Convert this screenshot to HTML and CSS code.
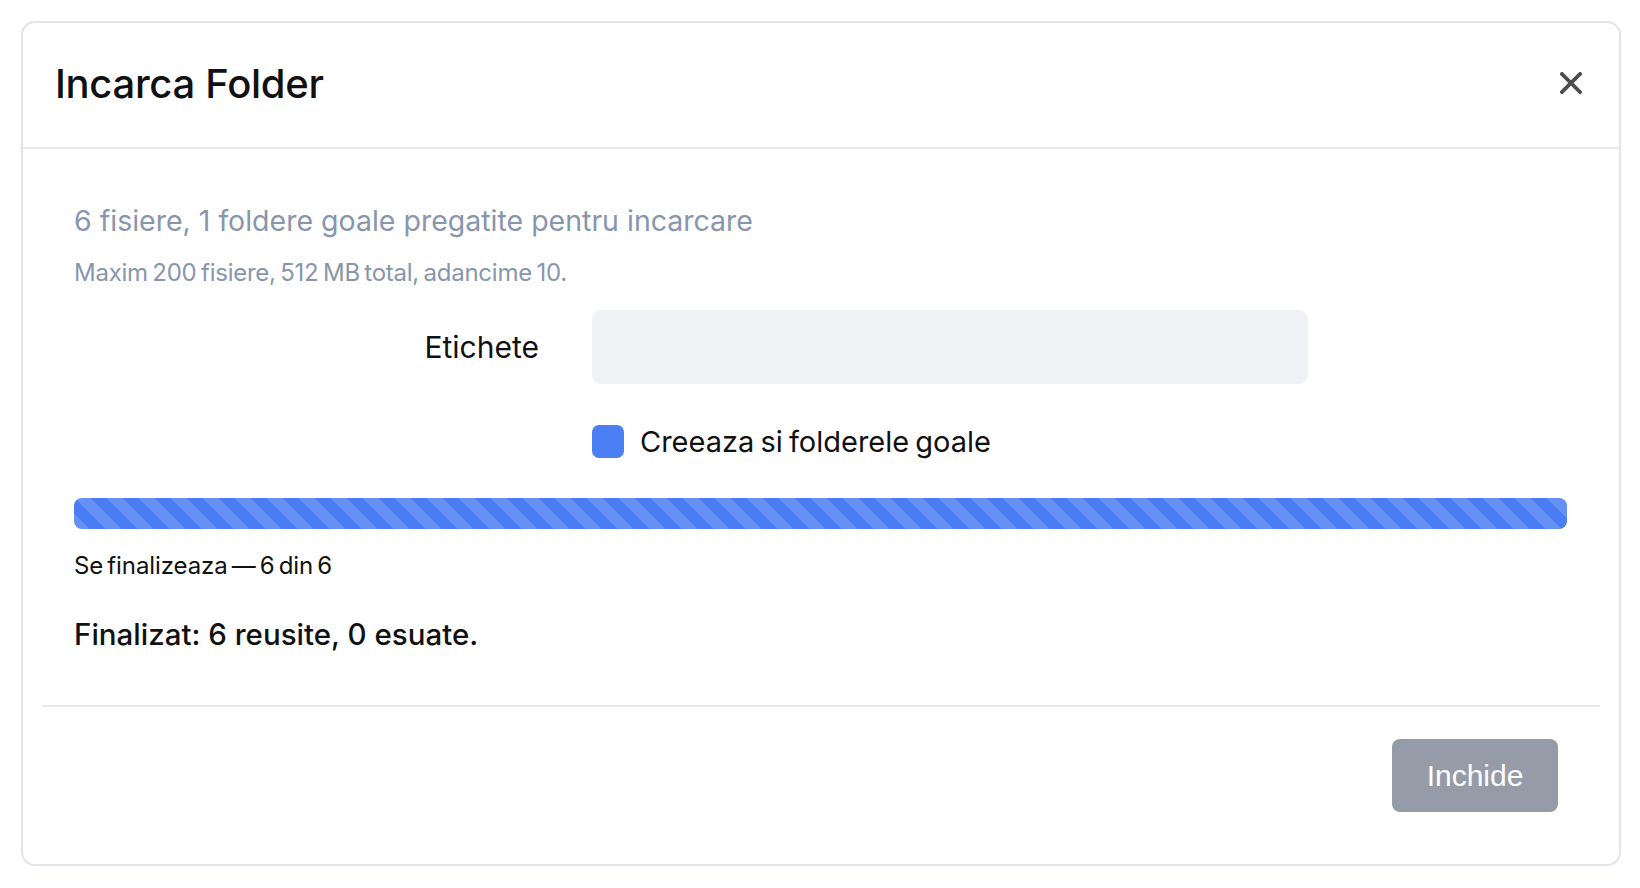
FILE: index.html
```html
<!DOCTYPE html>
<html lang="ro">
<head>
<meta charset="utf-8">
<title>Incarca Folder</title>
<link rel="stylesheet" href="styles.css">
</head>
<body>
<div class="modal">
  <div class="modal-header">
    <h5 class="modal-title">Incarca Folder</h5>
    <button class="btn-close" aria-label="Close">
      <svg viewBox="0 0 22 22" width="22" height="22"><path d="M2 2 L20 20 M20 2 L2 20" stroke="#4d4d4d" stroke-width="3.8" stroke-linecap="square" fill="none"/></svg>
    </button>
  </div>
  <div class="modal-body">
    <p class="summary">6 fisiere, 1 foldere goale pregatite pentru incarcare</p>
    <p class="limits">Maxim 200 fisiere, 512 MB total, adancime 10.</p>
    <div class="form-row">
      <label class="form-label">Etichete</label>
      <div class="form-input"></div>
    </div>
    <div class="check-row">
      <span class="checkbox"></span>
      <span class="check-label">Creeaza si folderele goale</span>
    </div>
    <div class="progress"><div class="progress-bar"></div></div>
    <p class="status">Se finalizeaza — 6 din 6</p>
    <p class="result">Finalizat: 6 reusite, 0 esuate.</p>
  </div>
  <div class="modal-footer">
    <button class="btn-secondary">Inchide</button>
  </div>
</div>
</body>
</html>
```
FILE: styles.css
```css
* { box-sizing: border-box; }
html, body { margin: 0; padding: 0; background: #ffffff; }
body {
  padding: 21px;
  font-family: Inter, "Noto Sans", "Liberation Sans", sans-serif;
  color: #111111;
}
.modal {
  width: 1600px;
  height: 845px;
  border: 2px solid #e1e4e8;
  border-radius: 14px;
  display: flex;
  flex-direction: column;
}
.modal-header {
  height: 126px;
  border-bottom: 2px solid #e6e8ec;
  display: flex;
  align-items: center;
  justify-content: space-between;
  padding: 0 37px 4px 32px;
}
.modal-title {
  margin: 0;
  font-size: 40px;
  font-weight: 500;
  letter-spacing: -0.3px;
}
.btn-close {
  border: 0;
  background: none;
  padding: 0;
  width: 22px;
  height: 22px;
  display: flex;
}
.modal-body {
  padding: 51px 52px 0 51px;
  flex: 1;
}
.summary {
  margin: 0;
  font-size: 28.5px;
  line-height: 42px;
  color: #8796ad;
}
.limits {
  margin: 14px 0 0;
  font-size: 24px;
  line-height: 34px;
  color: #8796ad;
  word-spacing: -2px;
  letter-spacing: -0.25px;
}
.form-row {
  display: grid;
  grid-template-columns: 465px 716px;
  column-gap: 53px;
  align-items: center;
  margin-top: 20px;
}
.form-label {
  text-align: right;
  font-size: 30px;
}
.form-input {
  height: 74px;
  background: #f0f1f4;
  border-radius: 9px;
}
.check-row {
  display: flex;
  align-items: center;
  gap: 16px;
  margin: 40px 0 0 518px;
}
.checkbox {
  width: 32px;
  height: 33px;
  background: #4b7ef2;
  border-radius: 7px;
}
.check-label {
  font-size: 29px;
  word-spacing: -2px;
}
.progress {
  margin-top: 39px;
  height: 31px;
  border-radius: 8px;
  overflow: hidden;
  background: #e9ecef;
}
.progress-bar {
  height: 100%;
  width: 100%;
  background-color: #4a7df3;
  background-image: linear-gradient(45deg, rgba(255,255,255,0.15) 25%, transparent 25%, transparent 50%, rgba(255,255,255,0.15) 50%, rgba(255,255,255,0.15) 75%, transparent 75%, transparent);
  background-size: 32px 32px;
}
.status {
  margin: 20px 0 0;
  font-size: 24px;
  line-height: 34px;
  word-spacing: -2.5px;
  letter-spacing: -0.1px;
}
.result {
  margin: 30px 0 0;
  font-size: 29.5px;
  font-weight: 500;
  line-height: 42px;
}
.modal-footer {
  margin: 0 19px 0 19px;
  border-top: 2px solid #e6e8ec;
  padding: 32px 42px 52px 0;
  display: flex;
  justify-content: flex-end;
}
.btn-secondary {
  width: 166px;
  height: 73px;
  border: 0;
  border-radius: 8px;
  background: #959ca8;
  color: #ffffff;
  font-family: "Liberation Sans", Arial, sans-serif;
  font-size: 30px;
}
```
